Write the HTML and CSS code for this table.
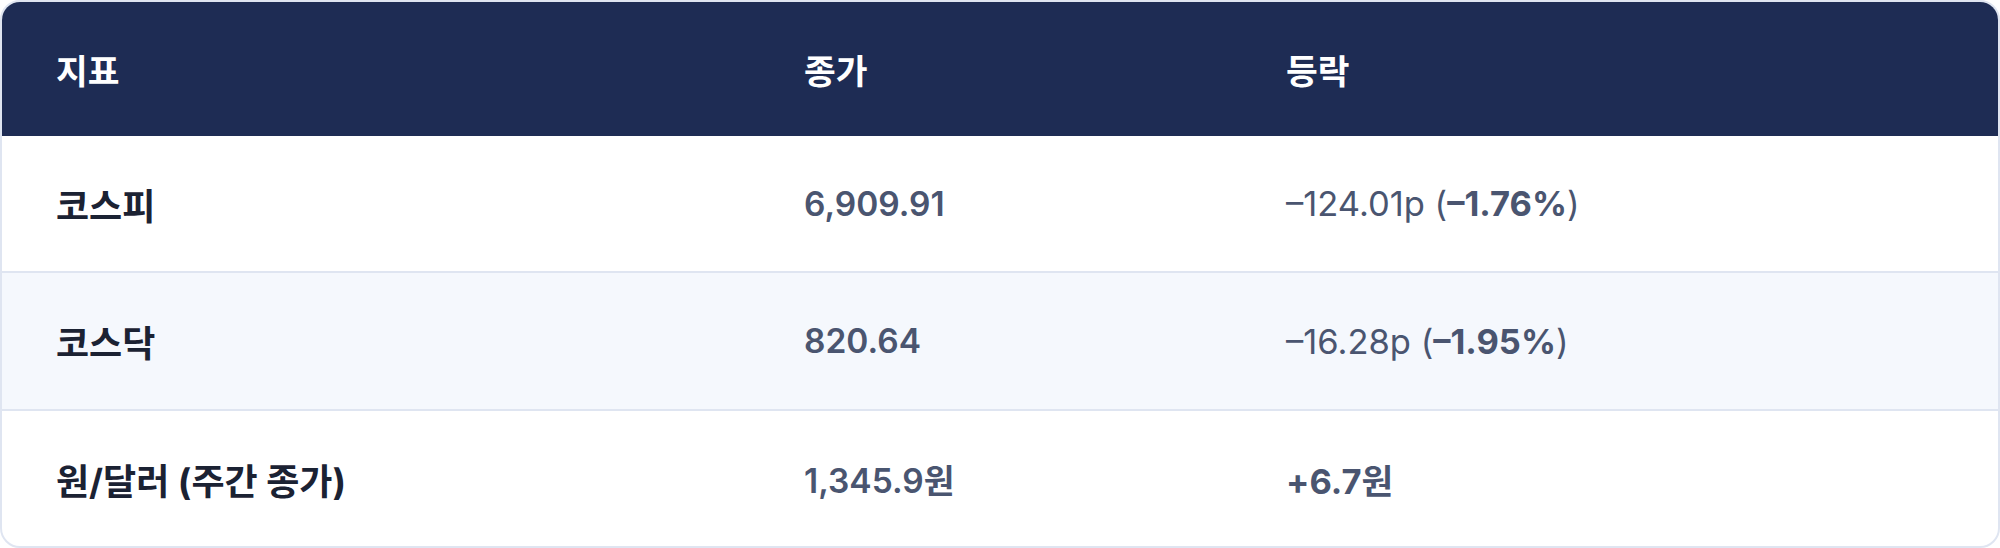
FILE: index.html
```html
<!DOCTYPE html>
<html lang="ko">
<head>
<meta charset="utf-8">
<title>지표</title>
<link rel="stylesheet" href="styles.css">
</head>
<body>
<div class="card">
  <table class="market">
    <colgroup>
      <col class="c1">
      <col class="c2">
      <col class="c3">
    </colgroup>
    <thead>
      <tr>
        <th>지표</th>
        <th>종가</th>
        <th>등락</th>
      </tr>
    </thead>
    <tbody>
      <tr class="r1">
        <td class="label">코스피</td>
        <td class="close">6,909.91</td>
        <td class="change">–124.01p (<strong>–1.76%</strong>)</td>
      </tr>
      <tr class="r2 alt">
        <td class="label">코스닥</td>
        <td class="close">820.64</td>
        <td class="change">–16.28p (<strong>–1.95%</strong>)</td>
      </tr>
      <tr class="r3">
        <td class="label">원/달러 (주간 종가)</td>
        <td class="close">1,345.9원</td>
        <td class="change"><strong>+6.7원</strong></td>
      </tr>
    </tbody>
  </table>
</div>
</body>
</html>
```

FILE: styles.css
```css
html, body {
  margin: 0;
  padding: 0;
  background: #ffffff;
}

body {
  font-family: Inter, "Noto Sans CJK KR", sans-serif;
}

.card {
  width: 2000px;
  height: 548px;
  box-sizing: border-box;
  border: 2px solid #dfe5f1;
  border-radius: 20px;
  overflow: hidden;
  background: #ffffff;
}

.market {
  width: 100%;
  border-collapse: collapse;
  table-layout: fixed;
}

.c1 { width: 748px; }
.c2 { width: 482px; }
.c3 { width: auto; }

.market th {
  background: #1e2c54;
  color: #ffffff;
  font-weight: 700;
  font-size: 34.5px;
  text-align: left;
  height: 134px;
  padding: 0 0 0 54px;
  box-sizing: border-box;
  vertical-align: middle;
}

.market td {
  font-size: 33px;
  padding: 0 0 0 54px;
  box-sizing: border-box;
  vertical-align: middle;
  color: #4a5570;
}

.r1 td { height: 136px; }
.r2 td { height: 138px; }
.r3 td { height: 136px; }

.market tbody tr + tr td {
  border-top: 2px solid #dfe5f1;
}

.alt td {
  background: #f5f8fd;
}

.market td.label {
  font-size: 36px;
  font-weight: 700;
  color: #1b2233;
}

.market td.close {
  font-size: 33.5px;
  font-weight: 600;
}

.market td.change {
  font-size: 34.5px;
  font-weight: 400;
}

.change strong {
  font-weight: 700;
}
```
